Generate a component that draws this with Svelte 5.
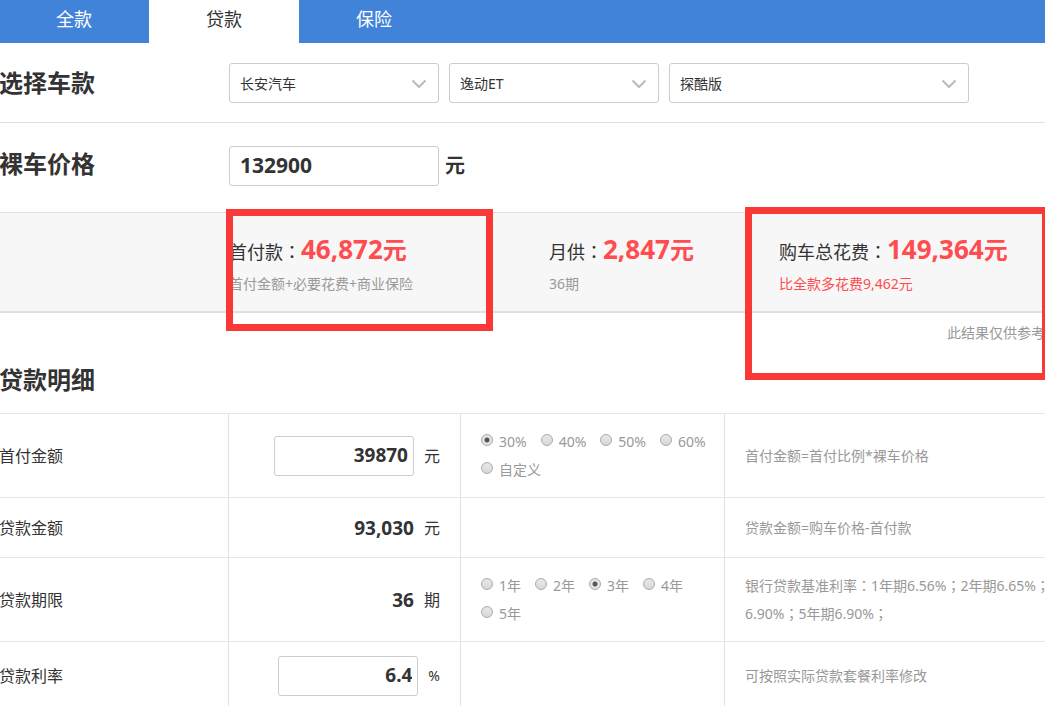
<script lang="ts">
  const tabs = ['全款', '贷款', '保险'];
  let activeTab = $state('贷款');

  const pickers = [
    { id: 'brand', label: '品牌', value: '长安汽车', size: 'normal' },
    { id: 'series', label: '车系', value: '逸动ET', size: 'normal' },
    { id: 'model', label: '车型', value: '探酷版', size: 'wide' },
  ];

  const downOptions = ['30%', '40%', '50%', '60%', '自定义'];
  const termOptions = ['1年', '2年', '3年', '4年', '5年'];

  let price = $state('132900');
  let downPayment = $state('39870');
  let rate = $state('6.4');
  let down = $state('30%');
  let term = $state('3年');
</script>

<!-- Full-width colons and semicolons sit centred in their box -->
{#snippet mark(char: string)}<span class="mark">{char}</span>{/snippet}

<div class="page">
  <nav class="tabs">
    {#each tabs as tab}
      <button type="button" class="tab" class:active={tab === activeTab} onclick={() => (activeTab = tab)}>{tab}</button>
    {/each}
  </nav>

  <section class="row">
    <h2>选择车款</h2>
    <div class="pickers">
      {#each pickers as picker}
        <div class="picker {picker.size}">
          <select id={picker.id} aria-label={picker.label}>
            <option>{picker.value}</option>
          </select>
          <svg class="arrow" viewBox="0 0 16 10" aria-hidden="true">
            <path d="M1.5 1.5 L8 8 L14.5 1.5" fill="none" stroke="#bbb" stroke-width="2" />
          </svg>
        </div>
      {/each}
    </div>
  </section>

  <section class="row price-row">
    <h2><label for="price">裸车价格</label></h2>
    <div class="price">
      <input id="price" class="box" type="text" bind:value={price} />
      <span>元</span>
    </div>
  </section>

  <section class="summary">
    <div class="figure">
      <p class="total">首付款{@render mark('：')}<strong>46,872<span class="yuan">元</span></strong></p>
      <p class="hint">首付金额+必要花费+商业保险</p>
    </div>
    <div class="figure">
      <p class="total">月供{@render mark('：')}<strong>2,847<span class="yuan">元</span></strong></p>
      <p class="hint">36期</p>
    </div>
    <div class="figure">
      <p class="total">购车总花费{@render mark('：')}<strong>149,364<span class="yuan">元</span></strong></p>
      <p class="hint warn">比全款多花费9,462元</p>
    </div>
    <div class="frame frame-down"></div>
    <div class="frame frame-total"></div>
  </section>

  <p class="note">此结果仅供参考</p>

  <h2 class="detail-title">贷款明细</h2>

  <table>
    <tbody>
      <tr class="tall">
        <th scope="row"><label for="down-payment">首付金额</label></th>
        <td class="amount">
          <div class="value">
            <input id="down-payment" class="box" type="text" bind:value={downPayment} />
            <span class="unit">元</span>
          </div>
        </td>
        <td class="choices">
          <div class="options">
            {#each downOptions as option}
              <label><input type="radio" name="down" value={option} bind:group={down} />{option}</label>
            {/each}
          </div>
        </td>
        <td class="remark">首付金额=首付比例*裸车价格</td>
      </tr>
      <tr class="short">
        <th scope="row">贷款金额</th>
        <td class="amount">
          <div class="value"><b>93,030</b><span class="unit">元</span></div>
        </td>
        <td class="choices"></td>
        <td class="remark">贷款金额=购车价格-首付款</td>
      </tr>
      <tr class="tall">
        <th scope="row">贷款期限</th>
        <td class="amount">
          <div class="value"><b>36</b><span class="unit">期</span></div>
        </td>
        <td class="choices">
          <div class="options">
            {#each termOptions as option}
              <label><input type="radio" name="term" value={option} bind:group={term} />{option}</label>
            {/each}
          </div>
        </td>
        <td class="remark">
          银行贷款基准利率{@render mark('：')}1年期6.56%{@render mark('；')}2年期6.65%{@render mark('；')}<br />
          6.90%{@render mark('；')}5年期6.90%{@render mark('；')}
        </td>
      </tr>
      <tr class="last">
        <th scope="row"><label for="rate">贷款利率</label></th>
        <td class="amount">
          <div class="value">
            <input id="rate" class="box" type="text" bind:value={rate} />
            <span class="unit percent">%</span>
          </div>
        </td>
        <td class="choices"></td>
        <td class="remark">可按照实际贷款套餐利率修改</td>
      </tr>
    </tbody>
  </table>
</div>

<style>
  :global(body) {
    overflow: hidden;
    background: #fff;
  }

  .page {
    margin-left: -1px;
    overflow: hidden;
    color: #333;
    font-family: 'Noto Sans', 'Noto Sans CJK SC', sans-serif;
    font-size: 14px;
    line-height: 28px;
  }

  .page * {
    box-sizing: border-box;
  }

  .mark {
    font-family: 'Noto Sans CJK TC', sans-serif;
    line-height: 1;
  }

  button,
  input,
  select {
    font-family: inherit;
    color: inherit;
    margin: 0;
  }

  h2,
  p {
    margin: 0;
  }

  h2 {
    font-size: 24px;
    font-weight: 700;
    line-height: 40px;
  }

  .tabs {
    display: flex;
    background: #4283da;
  }

  .tab {
    width: 150px;
    height: 43px;
    padding: 0 0 7px;
    border: 0;
    background: none;
    color: #fff;
    font-size: 18px;
    cursor: pointer;
  }

  .tab.active {
    background: #fff;
    color: #333;
  }

  .row {
    display: grid;
    grid-template-columns: 230px 1fr;
    align-items: center;
    height: 80px;
    border-bottom: 1px solid #e0e0e0;
  }

  .price-row {
    height: 90px;
    padding-bottom: 4px;
  }

  .price-row h2 {
    padding-bottom: 4px;
  }

  .pickers {
    display: flex;
    gap: 10px;
  }

  .picker {
    position: relative;
    width: 210px;
  }

  .picker.wide {
    width: 300px;
  }

  select {
    display: block;
    width: 100%;
    height: 40px;
    padding: 1px 30px 0 10px;
    border: 1px solid #ccc;
    border-radius: 3px;
    background: #fff;
    appearance: none;
    font-size: 14px;
  }

  .arrow {
    position: absolute;
    top: 16px;
    right: 12px;
    width: 16px;
    height: 10px;
    pointer-events: none;
  }

  .box {
    width: 140px;
    height: 40px;
    padding: 0 5px 2px;
    border: 1px solid #ccc;
    border-radius: 3px;
    background: #fff;
    font-size: 19px;
    font-weight: 700;
    text-align: right;
  }

  .price {
    display: flex;
    align-items: center;
    gap: 6px;
    font-size: 20px;
    font-weight: 700;
  }

  .price .box {
    width: 210px;
    padding: 0 10px 2px;
    font-size: 21px;
    text-align: left;
  }

  .summary {
    position: relative;
    display: grid;
    grid-template-columns: 320px 230px 1fr;
    height: 100px;
    padding: 20px 0 0 230px;
    border-bottom: 2px solid #e0e0e0;
    background: #f7f7f7;
    white-space: nowrap;
  }

  .total {
    height: 37px;
    font-size: 18px;
    line-height: 38px;
  }

  .total strong {
    color: #ff4c50;
    font-size: 26px;
    line-height: 1;
  }

  .total .yuan {
    font-size: 24px;
  }

  .hint {
    color: #999;
  }

  .hint.warn {
    color: #ff4c50;
  }

  /* Red call-outs drawn over the results */
  .frame {
    position: absolute;
    border: 7px solid #fb3838;
    pointer-events: none;
  }

  .frame-down {
    top: -4px;
    left: 227px;
    width: 267px;
    height: 122px;
  }

  .frame-total {
    top: -6px;
    left: 746px;
    width: 304px;
    height: 173px;
  }

  .note {
    padding-top: 6px;
    color: #999;
    text-align: right;
  }

  .detail-title {
    padding: 13px 0;
  }

  table {
    width: 100%;
    border-collapse: separate;
    border-spacing: 0;
    table-layout: fixed;
    border-top: 1px solid #e6e6e6;
  }

  th,
  td {
    padding: 0;
    border-bottom: 1px solid #e6e6e6;
    border-right: 1px solid #e0e0e0;
    vertical-align: middle;
  }

  th {
    width: 230px;
    font-size: 16px;
    font-weight: 400;
    text-align: left;
  }

  .tall {
    height: 84px;
  }

  .short {
    height: 60px;
  }

  .last {
    height: 69px;
  }

  .amount {
    width: 232px;
    padding-right: 20px;
  }

  .value {
    display: flex;
    align-items: center;
    justify-content: flex-end;
    gap: 10px;
  }

  .value b {
    font-size: 19px;
  }

  .unit {
    font-size: 16px;
  }

  .unit.percent {
    font-size: 14px;
  }

  .choices {
    width: 264px;
    padding-left: 20px;
    color: #999;
  }

  .options {
    display: flex;
    flex-wrap: wrap;
    column-gap: 14px;
  }

  .options label {
    display: flex;
    align-items: center;
    gap: 6px;
  }

  .options input {
    width: 12px;
    height: 12px;
    margin-bottom: 3px;
    border: 1px solid #aaa;
    border-radius: 50%;
    appearance: none;
    background: linear-gradient(#e8e8e8, #d8d8d8);
  }

  .options input:checked {
    background: radial-gradient(circle, #555 0, #555 2px, #e4e4e4 3px);
  }

  .remark {
    padding-left: 20px;
    border-right: 0;
    color: #999;
    white-space: nowrap;
  }
</style>
